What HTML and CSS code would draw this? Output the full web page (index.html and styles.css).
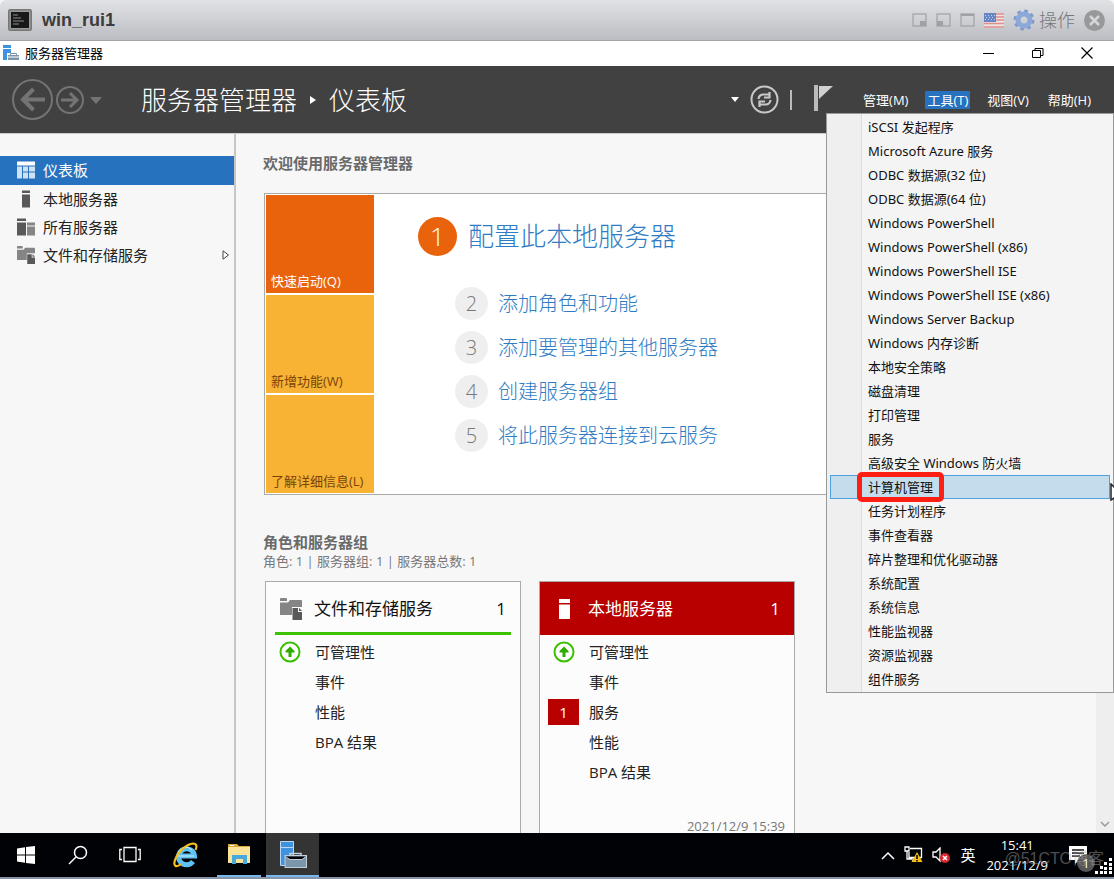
FILE: index.html
```html
<!DOCTYPE html>
<html lang="zh-CN">
<head>
<meta charset="utf-8">
<meta name="viewport" content="width=device-width, initial-scale=1">
<title>win_rui1</title>
<link rel="stylesheet" href="styles.css">
</head>
<body>
<svg class="defs" aria-hidden="true">
  <symbol id="i-storage" viewBox="0 0 22 22">
    <path fill="#858585" d="M0 1q0-1 1-1h5q1 0 1 1v2H0zM0 4.500h8l2-2.500h11q1 0 1 1v6H12v8H0z"/>
    <path fill="#595959" d="M12.500 10H18v4h4v8h-9.500z"/><path fill="#595959" d="M19 9.800l3 3.200h-3z"/>
  </symbol>
  <symbol id="i-up" viewBox="0 0 22 22">
    <circle cx="11" cy="11" r="9.500" fill="#fff" stroke="#3ac000" stroke-width="2"/>
    <path fill="#2fac00" d="M11 5.500l4.500 4.500v1.500h-3V16h-3v-4.500h-3V10z"/>
  </symbol>
  <symbol id="i-manager" viewBox="0 0 28 28">
    <path fill="#3e92de" stroke="#b9d8f3" d="M1.500 1.500h13v24h-13z"/><path stroke="#b9d8f3" d="M2 7.500h12"/>
    <path fill="none" stroke="#c3ced8" stroke-width="1.500" d="M11 16v-2.500h11V16"/>
    <rect x="6" y="15.500" width="21.500" height="12" fill="#7b95ab" stroke="#c3ced8"/>
    <path stroke="#c3ced8" d="M6 16.500l5 3h12l4-3"/>
  </symbol>
</svg>

<header class="console-bar">
  <svg class="console-icon" viewBox="0 0 24 22" aria-hidden="true"><rect x=".75" y=".75" width="22.500" height="20.500" rx="1.500" fill="#999" stroke="#777" stroke-width="1.500"/><path fill="#181818" d="M3 3h18v16H3z"/><path stroke="#666" stroke-width="1.500" d="M5 6h5M5 9h8M5 12h11M5 15h6"/></svg>
  <h1 class="console-title">win_rui1</h1>
  <div class="console-tools">
    <button aria-label="右下"><svg width="15" height="14"><path fill="none" stroke="#a9aaae" stroke-width="1.500" d="M1 1h13v12H1z"/><path fill="#a0a1a5" d="M8 8h6v5H8z"/></svg></button>
    <button aria-label="左下"><svg width="15" height="14"><path fill="none" stroke="#a9aaae" stroke-width="1.500" d="M1 1h13v12H1z"/><path fill="#a0a1a5" d="M1 8h6v5H1z"/></svg></button>
    <button aria-label="全屏"><svg width="15" height="14"><path fill="none" stroke="#a9aaae" stroke-width="1.500" d="M1 1h13v12H1z"/><path stroke="#a0a1a5" stroke-width="2" d="M1 2h13"/></svg></button>
    <button aria-label="键盘"><svg width="20" height="15"><path fill="#eee3e4" d="M0 0h20v15H0z"/><path stroke="#dd8f8c" stroke-width="1.500" d="M0 1h20M0 4h20M0 7h20M0 10.500h20M0 14h20"/><path fill="#6585c5" d="M0 0h12v9H0z"/><path stroke="#c4d1ed" stroke-dasharray="1 2" d="M1 2.500h10M2 4.500h9M1 6.500h10"/></svg></button>
    <button class="action"><svg width="22" height="22" viewBox="0 0 22 22" aria-hidden="true"><circle cx="11" cy="11" r="9" fill="none" stroke="#7b99cb" stroke-width="3" stroke-dasharray="3.500 3.570"/><circle cx="11" cy="11" r="6" fill="none" stroke="#8ba8d8" stroke-width="5"/></svg><span>操作</span></button>
    <button aria-label="关闭控制台"><svg width="21" height="21"><circle cx="10.500" cy="10.500" r="10.500" fill="#98999b"/><path stroke="#d6d7da" stroke-width="2.500" d="M6 6l9 9M15 6l-9 9"/></svg></button>
  </div>
</header>

<div class="window-bar">
  <svg class="app-icon" viewBox="0 0 16 16" aria-hidden="true"><path fill="#3e92de" d="M0 0h8v3H0zM0 4h8v11H0z"/><path fill="#fff" d="M4 8h12v8H4z"/><path fill="#7b95ab" d="M5 10h11v5H5z"/><path fill="none" stroke="#7b95ab" d="M7.500 10V8.500h6V10"/><path stroke="#fff" d="M5 12h11"/></svg>
  <span class="window-title">服务器管理器</span>
  <button aria-label="最小化"><svg width="12" height="12"><path stroke="#000" d="M0 6.500h11"/></svg></button>
  <button aria-label="还原"><svg width="12" height="12"><path fill="none" stroke="#000" d="M.5 3.500h8v7h-8zM3 3.500v-2h8v7H8.500"/></svg></button>
  <button aria-label="关闭"><svg width="12" height="12"><path stroke="#000" stroke-width="1.200" d="M.5.5l11 11M11.500.5l-11 11"/></svg></button>
</div>

<div class="toolbar">
  <div class="history">
    <button aria-label="后退"><svg width="41" height="41" fill="none" stroke="#747474"><circle cx="20.500" cy="20.500" r="19.500" stroke-width="2"/><path stroke-width="4" d="M33 20.500H10M21.500 10L11 20.500 21.500 31"/></svg></button>
    <button aria-label="前进"><svg width="28" height="28" fill="none" stroke="#747474"><circle cx="14" cy="14" r="13" stroke-width="2"/><path stroke-width="3" d="M5 14h16M14 7l7 7-7 7"/></svg></button>
    <button aria-label="历史记录"><svg width="12" height="8"><path fill="#747474" d="M0 1h12L6 8z"/></svg></button>
  </div>
  <div class="crumbs"><span>服务器管理器</span><svg width="6" height="10" aria-hidden="true"><path fill="#fff" d="M0 1l6 4-6 4z"/></svg><span>仪表板</span></div>
  <div class="status-tools">
    <button aria-label="刷新选项"><svg width="8" height="5"><path fill="#fff" d="M0 0h8L4 5z"/></svg></button>
    <button aria-label="刷新"><svg width="29" height="29" fill="none" stroke="#c8c8c8"><circle cx="14.500" cy="14.500" r="13" stroke-width="2"/><path stroke-width="2.200" d="M8.500 14q.5-4.500 5-4.500h5M20.500 15q-.5 4.500-5 4.500h-5M19.500 7v5.500H14M9.500 22v-5.500H15"/></svg></button>
    <span class="divider"></span>
    <button class="flag" aria-label="通知"><svg width="19" height="26"><path fill="#bbb" d="M0 0h4v26H0z"/><path fill="#d0d0d0" d="M5 1h14L5 14z"/></svg></button>
  </div>
  <nav class="menubar" aria-label="菜单">
    <button>管理(M)</button><button class="open" aria-expanded="true">工具(T)</button><button>视图(V)</button><button>帮助(H)</button>
  </nav>
  <ul class="tools-menu">
    <li><button>iSCSI 发起程序</button></li>
    <li><button>Microsoft Azure 服务</button></li>
    <li><button>ODBC 数据源(32 位)</button></li>
    <li><button>ODBC 数据源(64 位)</button></li>
    <li><button>Windows PowerShell</button></li>
    <li><button>Windows PowerShell (x86)</button></li>
    <li><button>Windows PowerShell ISE</button></li>
    <li><button>Windows PowerShell ISE (x86)</button></li>
    <li><button>Windows Server Backup</button></li>
    <li><button>Windows 内存诊断</button></li>
    <li><button>本地安全策略</button></li>
    <li><button>磁盘清理</button></li>
    <li><button>打印管理</button></li>
    <li><button>服务</button></li>
    <li><button>高级安全 Windows 防火墙</button></li>
    <li><button class="hover"><span class="marked">计算机管理</span></button><svg class="pointer" width="4" height="18" aria-hidden="true"><path fill="#fff" stroke="#223" stroke-width="1.500" d="M1 1l12 12H7l-6 4z"/></svg></li>
    <li><button>任务计划程序</button></li>
    <li><button>事件查看器</button></li>
    <li><button>碎片整理和优化驱动器</button></li>
    <li><button>系统配置</button></li>
    <li><button>系统信息</button></li>
    <li><button>性能监视器</button></li>
    <li><button>资源监视器</button></li>
    <li><button>组件服务</button></li>
  </ul>
</div>

<div class="body">
  <nav class="sidebar" aria-label="导航">
    <a href="#dashboard" class="current"><svg viewBox="0 0 18 17"><path fill="#fff" d="M0 0h18v4H0z"/><path fill="#cfe1f3" d="M0 5h5v12H0zM6 5h5v5H6zM12 5h6v5h-6zM6 11h5v6H6zM12 11h6v6h-6z"/></svg>仪表板</a>
    <a href="#local"><svg viewBox="0 0 18 17"><path fill="#595959" d="M5 0h8v2.500H5zM5 4h8v13H5z"/></svg>本地服务器</a>
    <a href="#all"><svg viewBox="0 0 18 17"><path fill="#595959" d="M0 0h9v2.500H0zM0 4h9v13H0z"/><path fill="#858585" d="M10 4h8v3h-8zM10 8h8v9h-8z"/></svg>所有服务器</a>
    <a href="#storage"><svg><use href="#i-storage"/></svg>文件和存储服务<svg class="expand" viewBox="0 0 8 10"><path fill="#fff" stroke="#444" d="M1 .8L6.500 5 1 9.200z"/></svg></a>
  </nav>
  <main class="content">
    <h2 class="section-title">欢迎使用服务器管理器</h2>
    <section class="welcome">
      <div class="tiles">
        <button class="tile active">快速启动(Q)</button>
        <button class="tile">新增功能(W)</button>
        <button class="tile">了解详细信息(L)</button>
      </div>
      <ol class="steps">
        <li class="primary"><span class="num">1</span><a href="#configure">配置此本地服务器</a></li>
        <li><span class="num">2</span><a href="#roles">添加角色和功能</a></li>
        <li><span class="num">3</span><a href="#add">添加要管理的其他服务器</a></li>
        <li><span class="num">4</span><a href="#group">创建服务器组</a></li>
        <li><span class="num">5</span><a href="#cloud">将此服务器连接到云服务</a></li>
      </ol>
    </section>
    <h2 class="section-title groups-title">角色和服务器组</h2>
    <p class="summary">角色: 1 | 服务器组: 1 | 服务器总数: 1</p>
    <div class="cards">
      <article class="card">
        <h3><svg width="22" height="22"><use href="#i-storage"/></svg><span>文件和存储服务</span><b>1</b></h3>
        <ul>
          <li><i><svg width="22" height="22"><use href="#i-up"/></svg></i>可管理性</li>
          <li><i></i>事件</li><li><i></i>性能</li><li><i></i>BPA 结果</li>
        </ul>
      </article>
      <article class="card alert">
        <h3><svg width="22" height="22"><path fill="#fff" d="M5 1h11v4H5zM5 6.500h11V21H5z"/></svg><span>本地服务器</span><b>1</b></h3>
        <ul>
          <li><i><svg width="22" height="22"><use href="#i-up"/></svg></i>可管理性</li>
          <li><i></i>事件</li><li><i class="count">1</i>服务</li><li><i></i>性能</li><li><i></i>BPA 结果</li>
        </ul>
        <time>2021/12/9 15:39</time>
      </article>
    </div>
  </main>
  <div class="scrollbar"><svg width="10" height="6"><path fill="none" stroke="#999" stroke-width="1.500" d="M1 1l4 4 4-4"/></svg></div>
</div>

<footer class="taskbar">
  <div class="apps">
    <button aria-label="开始"><svg width="18" height="18"><path fill="#fff" d="M0 2.500L8 1.300V8.500H0zM9 1.100L18 0v8.500H9zM0 9.500h8v7.200L0 15.500zM9 9.500h9V18L9 16.900z"/></svg></button>
    <button aria-label="搜索"><svg width="20" height="20" fill="none" stroke="#fff" stroke-width="1.500"><circle cx="12.500" cy="7.500" r="6"/><path d="M8 12l-7 7"/></svg></button>
    <button aria-label="任务视图"><svg width="22" height="18" fill="none" stroke="#fff" stroke-width="1.300"><path d="M5 1.500h12v14H5zM3 3.500H.8v10H3M19 3.500h2.200v10H19"/></svg></button>
    <button class="ie" aria-label="Internet Explorer"><svg width="26" height="26"><path fill="none" stroke="#5fc2f2" stroke-width="5" d="M5.500 14H21.500A8 8 0 1 0 20 19.500"/><path fill="none" stroke="#cdeefd" stroke-width="1" d="M5 12a8 8 0 0 1 14-4M5 14h16"/><path fill="none" stroke="#f2c11d" stroke-width="2.200" d="M8 22C3 26 0 24 2 18 5 9 14 2 20 1.500c4 0 4 3 2.500 6.500"/></svg></button>
    <button class="running" aria-label="文件资源管理器"><svg width="24" height="22"><path fill="#d9a93b" d="M1 1h9l2 2h11v4H1z"/><path fill="#fbe398" d="M1 4h22v16H1z"/><path fill="#49a9dc" d="M5 12h15v9h-4v-5h-7v5H5z"/><path fill="#fff" d="M3 2h4v1H3z"/></svg></button>
    <button class="running focused" aria-label="服务器管理器"><svg width="28" height="28"><use href="#i-manager"/></svg></button>
  </div>
  <div class="tray">
    <button aria-label="显示隐藏的图标"><svg width="14" height="9"><path fill="none" stroke="#fff" stroke-width="1.500" d="M1 8l6-6 6 6"/></svg></button>
    <button aria-label="网络"><svg width="19" height="18"><path fill="none" stroke="#fff" stroke-width="1.300" d="M1 1h4v4H1zM6 2.500h11.500v9H5V6M3 5v8h5M9 12v3"/><path fill="#f4bd16" d="M13 6l5.500 10h-11z"/><path stroke="#000" stroke-width="1.500" d="M13 9v4M13 14v1.500"/></svg></button>
    <button aria-label="音量"><svg width="19" height="17"><path fill="none" stroke="#fff" stroke-width="1.300" d="M1 5h3l4-4v13l-4-4H1z"/><circle cx="13" cy="11" r="5" fill="#d8242c"/><path stroke="#fff" stroke-width="1.500" d="M11 9l4 4M15 9l-4 4"/></svg></button>
    <button class="lang">英</button>
    <button class="clock"><span>15:41</span><span>2021/12/9</span></button>
    <button class="notes" aria-label="通知，1 条"><svg width="18" height="18"><path fill="#fff" d="M0 0h18v14h-8l-4 4v-4H0z"/><path stroke="#111" stroke-width="1.500" d="M3 4h12M3 7h12M3 10h8"/></svg><span class="badge">1</span></button>
  </div>
  <svg class="grip" width="18" height="16" fill="#fff" aria-hidden="true"><path d="M14 0h3v3h-3zM9 4h3v3H9zM14 5h3v3h-3zM5 8h3v3H5zM9 9h3v3H9zM14 9h3v3h-3zM0 13h3v3H0zM5 13h3v3H5zM9 13h3v3H9zM14 13h3v3h-3z"/></svg>
  <span class="watermark">@51CTO博客</span>
</footer>
</body>
</html>
```
FILE: styles.css
```css
* { box-sizing: border-box; }
body {
  margin: 0;
  height: 100vh;
  display: flex;
  flex-direction: column;
  overflow: hidden;
  background: #f7f7f7;
  color: #222;
  font: 13px/18px "Open Sans", "Noto Sans CJK SC", sans-serif;
}
button { padding: 0; border: 0; background: none; color: inherit; font: inherit; display: flex; align-items: center; }
svg { display: block; flex: none; }
ul, ol, h1, h2, h3, p { margin: 0; padding: 0; list-style: none; }
a { color: inherit; text-decoration: none; }
.defs { position: absolute; width: 0; height: 0; }

.console-bar {
  flex: none;
  height: 41px;
  display: flex;
  align-items: center;
  padding: 0 9px 0 8px;
  background: linear-gradient(#e1e2e6, #bcbdc2);
  border-bottom: 1px solid #a5a5a9;
  border-radius: 6px 6px 0 0;
}
.console-icon { width: 24px; height: 22px; }
.console-title { margin-left: 10px; font: bold 18px/24px "Liberation Sans", sans-serif; color: #3c3c3c; }
.console-tools { margin-left: auto; display: flex; align-items: center; gap: 9px; }
.action { gap: 4px; font-size: 18px; font-weight: 300; color: #77787b; }

.window-bar { flex: none; height: 25px; display: flex; align-items: center; padding: 0 3px 1px; background: #fff; color: #000; }
.app-icon { width: 16px; height: 16px; }
.window-title { margin-left: 6px; margin-right: auto; }
.window-bar button { width: 49px; height: 24px; justify-content: center; }

.toolbar { position: relative; flex: none; height: 67px; display: flex; align-items: center; padding: 0 21px 0 12px; background: #414141; color: #fff; }
.history { display: flex; align-items: center; gap: 3px; }
.history button:last-child { margin-left: 3px; }
.crumbs { margin-left: 39px; display: flex; align-items: center; gap: 13px; font-size: 26px; line-height: 36px; font-weight: 300; }
.status-tools { margin-left: auto; display: flex; align-items: center; gap: 11px; }
.divider { width: 2px; height: 20px; background: #bbb; }
.flag { margin: 0 0 4px 11px; }
.menubar { margin-left: 28px; display: flex; gap: 15px; }
.menubar button { padding: 0 2px; }
.menubar button.open { background: #2672be; }

.tools-menu {
  position: absolute;
  z-index: 2;
  top: 47px;
  right: 0;
  width: 288px;
  padding: 1px 3px;
  border: 1px solid #999;
  background: linear-gradient(90deg, #efefef 34px, #dedede 34px, #dedede 35px, #f4f4f4 35px);
  color: #111;
  font-family: "Noto Sans", "Noto Sans CJK SC", sans-serif;
}
.tools-menu li { position: relative; }
.tools-menu button { width: 100%; height: 24px; padding-left: 37px; border: 1px solid transparent; }
.tools-menu button.hover { background: #c4dded; border-color: #4ea3de; }
.marked { position: relative; }
.marked::after { content: ""; position: absolute; inset: -6px -11px; border: 5px solid #ff1e12; border-radius: 5px; }
.pointer { position: absolute; top: 8px; right: -4px; }

.body { flex: 1; min-height: 0; display: flex; border-top: 1px solid #ccc; }
.sidebar { flex: none; width: 236px; padding-top: 22px; border-right: 2px solid #c6c6c6; }
.sidebar a { height: 28px; display: flex; align-items: center; gap: 8px; padding: 0 4px 1px 17px; font-size: 15px; }
.sidebar a.current { height: 29px; background: #2672be; color: #fff; }
.sidebar svg { width: 18px; height: 18px; }
.sidebar .expand { width: 8px; height: 12px; margin-left: auto; }

.content { flex: 1; min-width: 0; padding: 19px 15px 0 27px; display: flex; flex-direction: column; }
.section-title { font-size: 15px; line-height: 20px; font-weight: bold; color: #6a6a6a; }
.welcome { margin: 20px 0 0 1px; display: flex; border: 1px solid #aaa; background: #fff; padding: 1px; }
.tiles { width: 108px; display: flex; flex-direction: column; gap: 2px; }
.tile { height: 98px; padding: 0 5px 3px; align-items: flex-end; background: #f8b234; color: #7a4409; }
.tile.active { background: #e9630d; color: #fff; }
.steps { padding: 21px 0 0 81px; color: #2f7cc4; }
.steps li { display: flex; align-items: center; gap: 10px; height: 33px; margin-bottom: 11px; font-size: 20px; font-weight: 300; }
.num { width: 33px; height: 33px; border-radius: 50%; background: #efefef; color: #777; text-align: center; line-height: 33px; }
.steps .primary { height: 40px; margin: 0 0 31px -37px; gap: 11px; font-size: 26px; }
.primary .num { width: 39px; height: 39px; line-height: 39px; background: #e9630d; color: #fff; }
.groups-title { margin-top: 37px; }
.summary { color: #777; }
.cards { flex: 1; min-height: 0; margin: 11px 0 0 2px; display: flex; gap: 18px; }
.card { width: 256px; display: flex; flex-direction: column; overflow: hidden; border: 1px solid #aaa; border-bottom: 0; background: #fcfcfc; }
.card h3 { height: 53px; margin: 0 9px; padding: 3px 5px 0; display: flex; align-items: center; border-bottom: 3px solid #3dc200; font-size: 17px; font-weight: 400; color: #111; }
.card h3 span { margin-left: 12px; margin-right: auto; }
.card b { font-weight: 400; }
.card.alert h3 { margin: 0; padding: 0 14px; border: 0; background: #b80000; color: #fff; }
.card ul { padding-top: 2px; }
.card li { height: 30px; display: flex; align-items: center; gap: 10px; padding-left: 8px; font-size: 15px; }
.card i { width: 31px; display: flex; justify-content: center; font-style: normal; }
.card i.count { height: 26px; align-items: center; background: #b80000; color: #fff; }
.card time { margin: auto 9px 0 auto; font-size: 13px; line-height: 14px; color: #777; }
.scrollbar { flex: none; width: 18px; display: flex; align-items: flex-end; justify-content: center; padding-bottom: 6px; background: #eee; }

.taskbar { position: relative; flex: none; height: 46px; display: flex; background: #010205; color: #fff; border-bottom: 2px solid #8793a8; }
.apps { display: flex; }
.apps button { width: 52px; justify-content: center; }
.apps .ie { margin: 0 1px 0 4px; }
.running { border-bottom: 2px solid #76b9ed; }
.apps .running { width: 44px; margin: 0 5px 0 4px; }
.apps .focused { width: 53px; margin: 0; background: #343434; }
.tray { margin-left: auto; display: flex; padding-right: 23px; }
.tray button { margin-right: 9px; }
.tray .lang { font-size: 15px; }
.tray .clock { flex-direction: column; justify-content: center; margin: 0 21px 0 2px; line-height: 20px; font-size: 13px; }
.tray .notes { position: relative; margin: 0 4px 0 0; }
.badge { position: absolute; left: 8px; bottom: 5px; width: 18px; height: 18px; border-radius: 50%; background: #555; line-height: 18px; text-align: center; }
.grip { position: absolute; right: 1px; bottom: 3px; }
.watermark { position: absolute; right: 10px; bottom: 6px; font: 16px/24px "Liberation Sans", "Noto Sans CJK SC", sans-serif; color: #aaa; opacity: .45; }
```
